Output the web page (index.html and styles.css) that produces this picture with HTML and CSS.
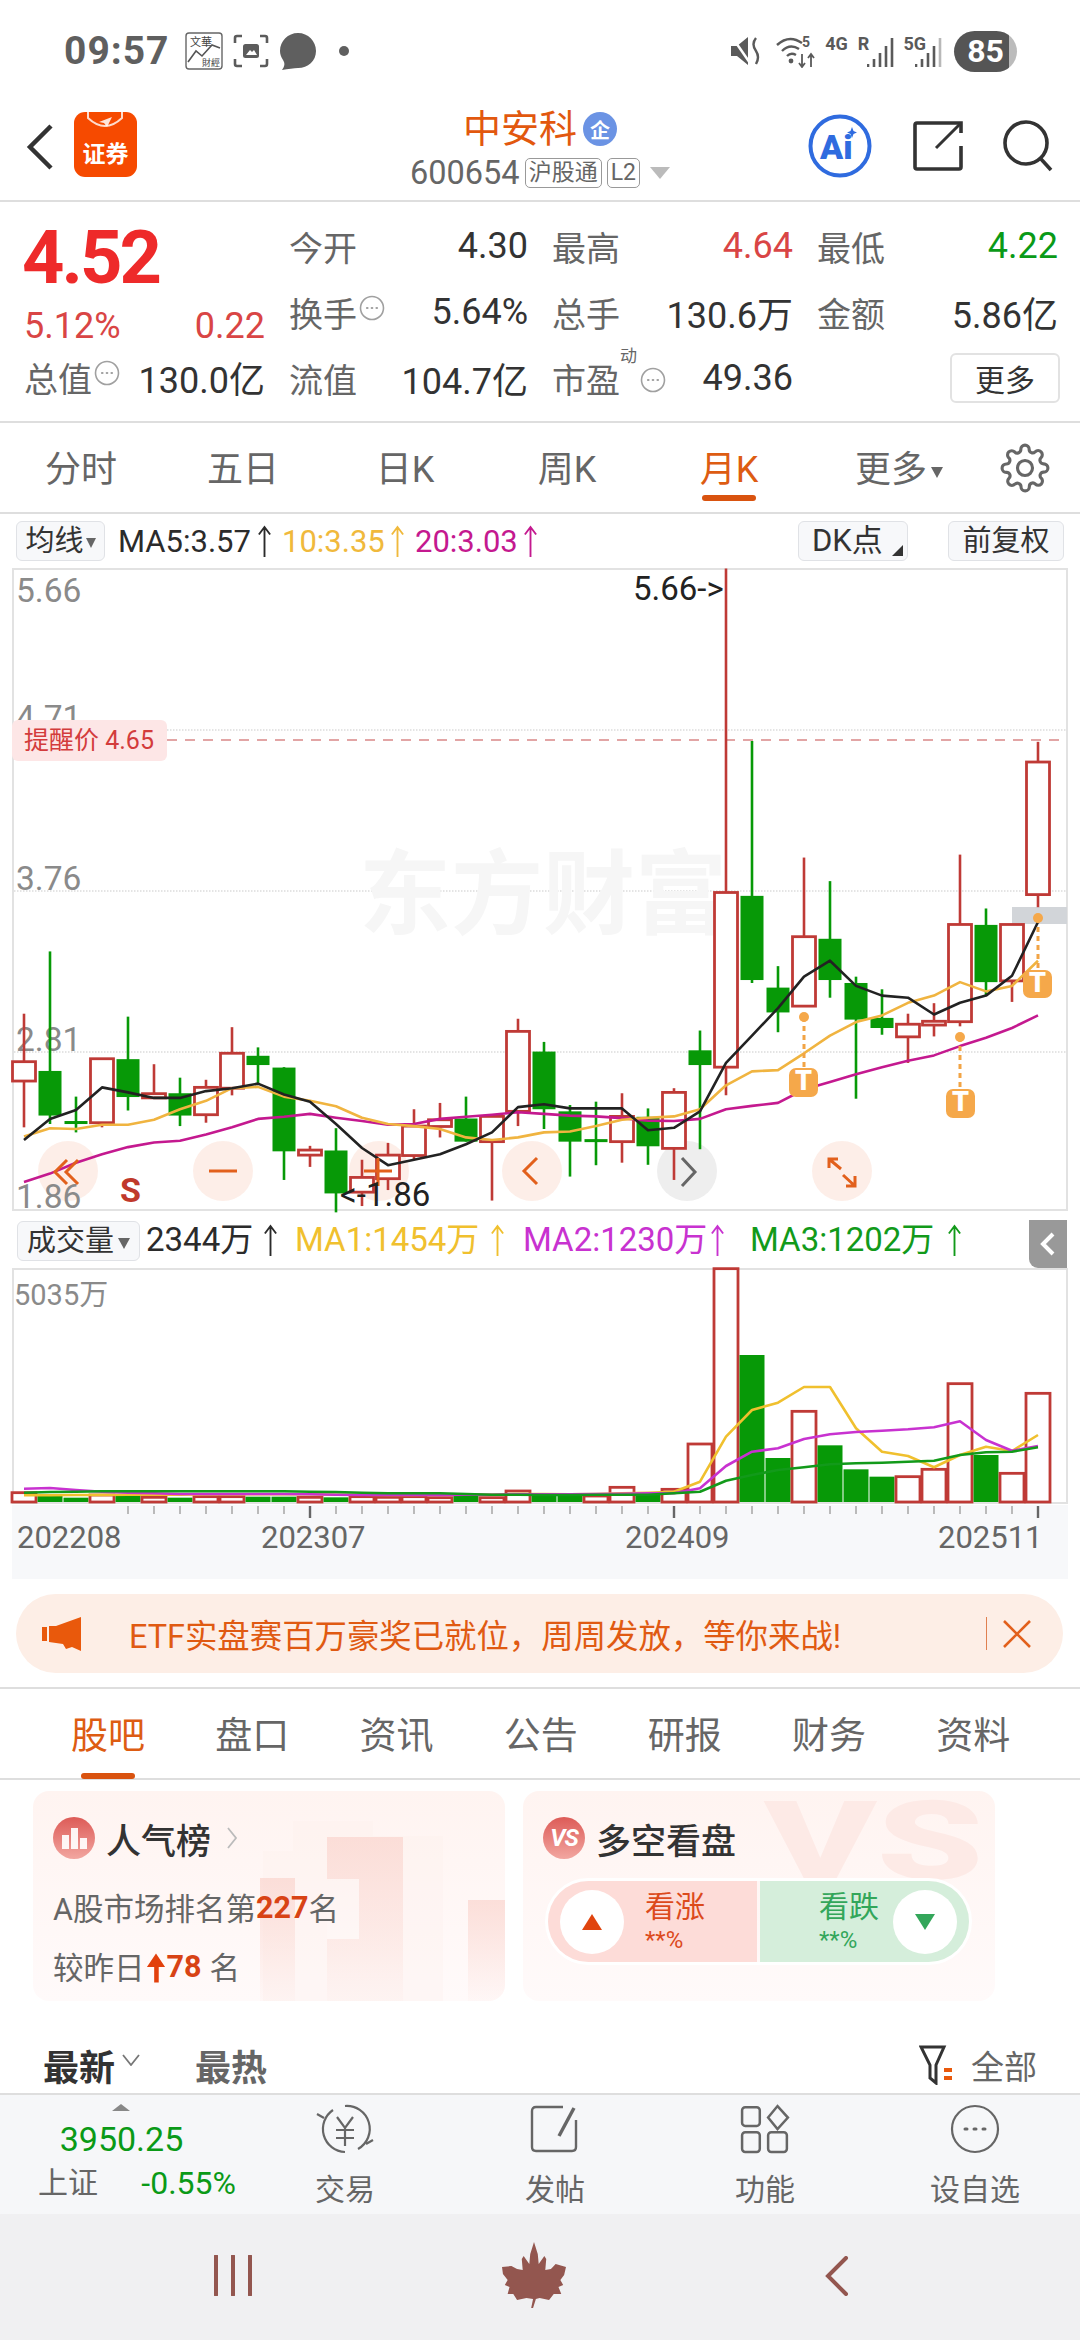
FILE: index.html
```html
<!DOCTYPE html>
<html lang="zh-CN">
<head>
  <meta charset="UTF-8">
  <title>中安科 600654</title>
  <link rel="stylesheet" href="styles.css">
</head>
<body>

<!-- === Status Bar === -->
<div class="status">
  <span class="clock">09:57</span>
  <svg class="st-news" viewBox="0 0 38 38">
    <rect x="1" y="1" width="36" height="36" rx="3" fill="#fff" stroke="#666" stroke-width="1.4"/>
    <text x="5" y="14" class="st-news-a">文華</text>
    <text x="17" y="34" class="st-news-b">財經</text>
    <polyline points="3,30 11,19 17,24 27,13 35,16" fill="none" stroke="#555" stroke-width="1.6"/>
  </svg>
  <svg class="st-shot" viewBox="0 0 36 34" fill="none" stroke="#5c5c5c" stroke-width="2.6">
    <path d="M9 2H4Q2 2 2 4V9M27 2H32Q34 2 34 4V9M2 25V30Q2 32 4 32H9M34 25V30Q34 32 32 32H27"/>
    <rect x="10" y="10" width="16" height="14" rx="2.5" fill="#5c5c5c" stroke="none"/>
    <path d="M13 21L17 16L19 18L21 16L24 21Z" fill="#fff" stroke="none"/>
  </svg>
  <svg class="st-bubble" viewBox="0 0 38 38"><path d="M19 1C29 1 37 9 37 19C37 29 29 36 19 36C15 36 9 37 3 38C6 34 6 31 4 28C2 25 1 22 1 19C1 9 9 1 19 1Z" fill="#5f5f5f"/></svg>
  <i class="st-dot"></i>
  <span class="status-gap"></span>
  <svg class="st-mute" viewBox="0 0 30 30">
    <path d="M0 10H6L17 1V29L6 20H0Z" fill="#5a5a5a"/>
    <path d="M1 1L19 27" stroke="#fff" stroke-width="2.5"/>
    <path d="M25 2Q20 8 25 15Q29 21 25 28" fill="none" stroke="#5a5a5a" stroke-width="2.4"/>
  </svg>
  <svg class="st-wifi" viewBox="0 0 42 34" fill="none" stroke="#5a5a5a" stroke-width="2.4">
    <path d="M1 11Q13 0 26 9M6 17Q14 9 23 15M11 22Q15 18 20 21"/>
    <circle cx="15" cy="27" r="2.4" fill="#5a5a5a" stroke="none"/>
    <path d="M26 20V33M23 29L26 33L29 29M35 33V20M32 24L35 20L38 24" stroke-width="1.8"/>
    <text x="26" y="13" class="st-tiny" fill="#5a5a5a" stroke="none">5</text>
  </svg>
  <span class="st-net st-4g">4G</span>
  <span class="st-net st-r">R</span>
  <svg class="st-bars" viewBox="0 0 27 30"><path d="M1 30V27M7 30V22M13 30V16M19 30V9M25 30V1" stroke="#5a5a5a" stroke-width="2.6"/></svg>
  <span class="st-net st-5g">5G</span>
  <svg class="st-bars st-bars-b" viewBox="0 0 27 30"><path d="M1 30V27M7 30V22M13 30V16M19 30V9" stroke="#5a5a5a" stroke-width="2.6"/><path d="M25 30V1" stroke="#b8b8b8" stroke-width="2.6"/></svg>
  <span class="battery"><b>85</b></span>
</div>

<!-- === Stock Header === -->
<header class="topbar">
  <div class="top-left">
    <svg class="back" viewBox="0 0 28 48"><path d="M25 3L4 24L25 45" fill="none" stroke="#333" stroke-width="4.5"/></svg>
    <div class="app-icon">
      <svg viewBox="0 0 63 26" class="app-mark"><path d="M14 0V6Q31 22 48 6V0" fill="none" stroke="#fff" stroke-opacity=".8" stroke-width="2"/><path d="M25 10L38 5L33 15L30 11Z" fill="#fff" fill-opacity=".85"/></svg>
      <span>证券</span>
    </div>
  </div>
  <div class="top-title">
    <div class="name-line"><span class="stock-name">中安科</span><span class="name-badge">企</span></div>
    <div class="code-line"><span class="stock-code">600654</span><span class="tag">沪股通</span><span class="tag">L2</span><i class="tri-down"></i></div>
  </div>
  <div class="top-right">
    <svg class="ai-icon" viewBox="0 0 64 64">
      <circle cx="32" cy="32" r="29.5" fill="#fff" stroke="#2f6bdf" stroke-width="4"/>
      <text x="12" y="45" class="ai-text">Ai</text>
      <path d="M44 13L45.500 17L49 18.500L45.500 20L44 24L42.500 20L39 18.500L42.500 17Z" fill="#2f6bdf"/>
    </svg>
    <svg class="ic-share" viewBox="0 0 50 50" fill="none" stroke="#333" stroke-width="3.6">
      <path d="M48 25V46Q48 48 46 48H4Q2 48 2 46V4Q2 2 4 2H48V12"/>
      <path d="M23 27L47 3" stroke-width="3"/>
    </svg>
    <svg class="ic-search" viewBox="0 0 50 52" fill="none" stroke="#333" stroke-width="3.6">
      <circle cx="23" cy="23" r="21"/><path d="M38 39L48 50"/>
    </svg>
  </div>
</header>

<!-- === Quote Panel === -->
<section class="quote">
  <div class="quote-left">
    <div class="price">4.52</div>
    <div class="change"><span>5.12%</span><span>0.22</span></div>
    <div class="cell total"><span class="lbl">总值<svg class="more-dot" viewBox="0 0 26 26"><circle cx="13" cy="13" r="11.5"/><path class="dots" d="M8 13h.5M12.750 13h.5M17.500 13h.5"/></svg></span><span class="val">130.0亿</span></div>
  </div>
  <div class="quote-grid">
    <div class="cell"><span class="lbl">今开</span><span class="val">4.30</span></div>
    <div class="cell"><span class="lbl">最高</span><span class="val up">4.64</span></div>
    <div class="cell"><span class="lbl">最低</span><span class="val down">4.22</span></div>
    <div class="cell"><span class="lbl">换手<svg class="more-dot" viewBox="0 0 26 26"><circle cx="13" cy="13" r="11.5"/><path class="dots" d="M8 13h.5M12.750 13h.5M17.500 13h.5"/></svg></span><span class="val">5.64%</span></div>
    <div class="cell"><span class="lbl">总手</span><span class="val">130.6万</span></div>
    <div class="cell"><span class="lbl">金额</span><span class="val">5.86亿</span></div>
    <div class="cell"><span class="lbl">流值</span><span class="val">104.7亿</span></div>
    <div class="cell"><span class="lbl">市盈<sup>动</sup><svg class="more-dot" viewBox="0 0 26 26"><circle cx="13" cy="13" r="11.5"/><path class="dots" d="M8 13h.5M12.750 13h.5M17.500 13h.5"/></svg></span><span class="val">49.36</span></div>
    <div class="cell cell-end"><button class="more-btn">更多</button></div>
  </div>
</section>

<!-- === Period Tabs === -->
<nav class="periods">
  <a>分时</a><a>五日</a><a>日K</a><a>周K</a>
  <a class="on">月K</a>
  <a class="more-tab">更多<i class="tri-small"></i></a>
  <svg class="ic-gear" viewBox="0 0 24 24" fill="none" stroke="#666" stroke-width="1.5">
    <circle cx="12" cy="12" r="3.6"/>
    <path d="M19.4 15a1.65 1.65 0 0 0 .33 1.82l.06.06a2 2 0 0 1 0 2.83 2 2 0 0 1-2.83 0l-.06-.06a1.65 1.65 0 0 0-1.82-.33 1.65 1.65 0 0 0-1 1.51V21a2 2 0 0 1-2 2 2 2 0 0 1-2-2v-.09A1.65 1.65 0 0 0 9 19.4a1.65 1.65 0 0 0-1.82.33l-.06.06a2 2 0 0 1-2.83 0 2 2 0 0 1 0-2.83l.06-.06a1.65 1.65 0 0 0 .33-1.82 1.65 1.65 0 0 0-1.51-1H3a2 2 0 0 1-2-2 2 2 0 0 1 2-2h.09A1.65 1.65 0 0 0 4.6 9a1.65 1.65 0 0 0-.33-1.82l-.06-.06a2 2 0 0 1 0-2.83 2 2 0 0 1 2.83 0l.06.06a1.65 1.65 0 0 0 1.82.33H9a1.65 1.65 0 0 0 1-1.51V3a2 2 0 0 1 2-2 2 2 0 0 1 2 2v.09a1.65 1.65 0 0 0 1 1.51 1.65 1.65 0 0 0 1.82-.33l.06-.06a2 2 0 0 1 2.83 0 2 2 0 0 1 0 2.83l-.06.06a1.65 1.65 0 0 0-.33 1.82V9a1.65 1.65 0 0 0 1.51 1H21a2 2 0 0 1 2 2 2 2 0 0 1-2 2h-.09a1.65 1.65 0 0 0-1.51 1z"/>
  </svg>
</nav>

<!-- === MA Legend === -->
<div class="ma-row">
  <span class="chip chip-ma">均线<i class="tri-small"></i></span>
  <span class="ma ma-a black">MA5:3.57<svg class="up-arrow" viewBox="0 0 16 34"><path d="M8 34V2M2 10L8 2L14 10"/></svg></span>
  <span class="ma ma-b yellow">10:3.35<svg class="up-arrow" viewBox="0 0 16 34"><path d="M8 34V2M2 10L8 2L14 10"/></svg></span>
  <span class="ma ma-b magenta">20:3.03<svg class="up-arrow" viewBox="0 0 16 34"><path d="M8 34V2M2 10L8 2L14 10"/></svg></span>
  <span class="chip chip-dk">DK点<i class="corner"></i></span>
  <span class="chip chip-fq">前复权</span>
</div>

<!-- === Price Chart === -->
<svg id="mainChart" class="chart chart-main" viewBox="0 568 1080 645">
  <rect x="13" y="569" width="1054" height="641" fill="#fff" stroke="#e2e2e2" stroke-width="2"/>
  <path class="grid-line" d="M14 730H1066M14 891H1066M14 1052H1066"/>
  <text x="359" y="927" class="watermark">东方财富</text>
  <g class="round-btn">
    <circle cx="68" cy="1171" r="30"/><circle cx="223" cy="1171" r="30"/><circle cx="379" cy="1171" r="30"/>
    <circle cx="532" cy="1171" r="30"/><circle cx="842" cy="1171" r="30"/>
    <circle cx="687" cy="1171" r="30" class="gray"/>
  </g>
  <text x="16" y="602" class="axis-y">5.66</text>
  <text x="16" y="729" class="axis-y">4.71</text>
  <text x="16" y="890" class="axis-y">3.76</text>
  <text x="16" y="1051" class="axis-y">2.81</text>
  <text x="16" y="1208" class="axis-y">1.86</text>
  <path d="M167 740H1067" class="alert-line"/>
  <rect x="12" y="720" width="155" height="41" rx="6" fill="#fde6e6"/>
  <text x="24" y="749" class="alert-text">提醒价 4.65</text>
  <rect x="1012" y="907" width="55" height="17" fill="#d2d5d9"/>
  <g id="candles"></g>
  <g id="mainLines"></g>
  <g class="round-icon">
    <path d="M67 1160L55 1172L67 1184M78 1160L66 1172L78 1184"/>
    <path d="M209 1171H237"/>
    <path d="M364 1171H392M378 1158V1186"/>
    <path d="M537 1158L524 1171L537 1184"/>
    <path d="M682 1158L695 1172L682 1186" class="gray"/>
    <path d="M829 1168V1159H838M829 1159L841 1169M855 1176V1186H846M855 1186L843 1175"/>
  </g>
  <text x="120" y="1202" class="s-mark">S</text>
  <text x="633" y="600" class="axis-note">5.66-&gt;</text>
  <text x="340" y="1206" class="axis-note">&lt;-1.86</text>
  <g class="t-mark">
    <path d="M804 1017V1068M960 1037V1089M1038 918V970"/>
    <circle cx="804" cy="1017" r="5"/><circle cx="960" cy="1037" r="5"/><circle cx="1038" cy="918" r="5"/>
    <rect x="789" y="1068" width="29" height="29" rx="7"/><rect x="946" y="1089" width="29" height="29" rx="7"/><rect x="1023" y="970" width="29" height="28" rx="7"/>
    <text x="803.5" y="1090">T</text><text x="960.5" y="1111">T</text><text x="1037.5" y="992">T</text>
  </g>
</svg>

<!-- === Volume Legend === -->
<div class="vol-row">
  <span class="chip chip-vol">成交量<i class="tri-small"></i></span>
  <span class="vol-item vol-a black">2344万<svg class="up-arrow" viewBox="0 0 16 34"><path d="M8 34V2M2 10L8 2L14 10"/></svg></span>
  <span class="vol-item vol-b gold">MA1:1454万<svg class="up-arrow" viewBox="0 0 16 34"><path d="M8 34V2M2 10L8 2L14 10"/></svg></span>
  <span class="vol-item vol-c purple">MA2:1230万<svg class="up-arrow" viewBox="0 0 16 34"><path d="M8 34V2M2 10L8 2L14 10"/></svg></span>
  <span class="vol-item vol-d green">MA3:1202万<svg class="up-arrow" viewBox="0 0 16 34"><path d="M8 34V2M2 10L8 2L14 10"/></svg></span>
  <span class="collapse"><svg viewBox="0 0 16 26" width="16" height="26"><path d="M13 3L3 13L13 23" fill="none" stroke="#fff" stroke-width="4"/></svg></span>
</div>

<!-- === Volume Chart === -->
<svg id="volChart" class="chart chart-vol" viewBox="0 1268 1080 311">
  <rect x="13" y="1269" width="1054" height="234" fill="#fff" stroke="#e2e2e2" stroke-width="2"/>
  <rect x="12" y="1505" width="1056" height="74" fill="#f7f8fa"/>
  <text x="14" y="1305" class="axis-vol">5035万</text>
  <g id="volBars"></g>
  <g id="volLines"></g>
  <g id="volTicks"></g>
  <text x="17" y="1548" class="axis-date">202208</text>
  <text x="261" y="1548" class="axis-date">202307</text>
  <text x="625" y="1548" class="axis-date">202409</text>
  <text x="938" y="1548" class="axis-date">202511</text>
</svg>

<!-- === Notice === -->
<div class="notice-wrap">
  <div class="notice">
    <svg class="notice-horn" viewBox="0 0 40 36"><path d="M0 11H5V25H0ZM7 10H14L39 1V35L30 31L24 33L21 28L7 26Z" fill="#e9590c"/></svg>
    <span class="notice-text">ETF实盘赛百万豪奖已就位，周周发放，等你来战!</span>
    <i class="notice-sep"></i>
    <svg class="notice-x" viewBox="0 0 30 30"><path d="M2 2L28 28M28 2L2 28" stroke="#e2601c" stroke-width="2.6"/></svg>
  </div>
</div>

<!-- === Info Tabs === -->
<nav class="info-tabs">
  <a class="on">股吧</a><a>盘口</a><a>资讯</a><a>公告</a><a>研报</a><a>财务</a><a>资料</a>
</nav>

<!-- === Rank / Sentiment Cards === -->
<section class="cards">
  <div class="card">
    <svg class="card-art" viewBox="0 0 472 210">
      <defs>
        <linearGradient id="podiumFade" x1="0" y1="0" x2="0" y2="1">
          <stop offset="0" stop-color="#fad4cd" stop-opacity=".7"/>
          <stop offset="1" stop-color="#fad4cd" stop-opacity=".08"/>
        </linearGradient>
      </defs>
      <path d="M260 30H340V45H410V210H230V60H260Z" fill="#fdeeea" fill-opacity=".3"/>
      <rect x="294" y="46" width="76" height="164" fill="url(#podiumFade)"/>
      <rect x="294" y="88" width="32" height="60" fill="#fff" fill-opacity=".6"/>
      <rect x="227" y="87" width="35" height="123" fill="url(#podiumFade)"/>
      <rect x="435" y="109" width="37" height="101" fill="url(#podiumFade)"/>
    </svg>
    <div class="card-head">
      <span class="card-icon"><svg viewBox="0 0 42 42" width="42" height="42"><path d="M9 18H16V32H9ZM18 11H25V32H18ZM27 21H34V32H27Z" fill="#fff" fill-opacity=".92"/></svg></span>
      <b>人气榜</b>
      <svg class="card-more" viewBox="0 0 12 24"><path d="M2 2L10 12L2 22" fill="none" stroke="#bbb" stroke-width="1.8"/></svg>
    </div>
    <p class="rank-line">A股市场排名第<strong>227</strong>名</p>
    <p class="rank-line rank-line-b">较昨日<svg class="rank-arrow" viewBox="0 0 22 32"><path d="M11 0L21 15H14V32H9V15H1Z" fill="#e2400c"/></svg><strong>78</strong><span class="rank-unit">名</span></p>
  </div>
  <div class="card">
    <span class="card-vs">VS</span>
    <div class="card-head">
      <span class="card-icon"><i>VS</i></span>
      <b>多空看盘</b>
    </div>
    <div class="vote">
      <div class="vote-side vote-up">
        <span class="vote-ball"><i class="vote-tri-up"></i></span>
        <span class="vote-txt">看涨<small>**%</small></span>
      </div>
      <div class="vote-side vote-down">
        <span class="vote-txt">看跌<small>**%</small></span>
        <span class="vote-ball"><i class="vote-tri-down"></i></span>
      </div>
    </div>
  </div>
</section>

<!-- === Feed Header === -->
<div class="feed-head">
  <b class="feed-on">最新</b>
  <svg class="feed-caret" viewBox="0 0 18 12"><path d="M1 1L9 11L17 1" fill="none" stroke="#777" stroke-width="1.8"/></svg>
  <b class="feed-off">最热</b>
  <svg class="feed-filter" viewBox="0 0 34 40" fill="none" stroke="#333" stroke-width="3">
    <path d="M2 2H25L17 20V38L11 33V20Z"/>
    <path d="M25 25H33M25 33H33" stroke="#e9590c" stroke-width="4"/>
  </svg>
  <span class="feed-all">全部</span>
</div>

<!-- === Dock === -->
<div class="dock">
  <div class="index-box">
    <i class="index-tri"></i>
    <div class="index-val">3950.25</div>
    <div class="index-row"><span>上证</span><span class="down">-0.55%</span></div>
  </div>
  <div class="dock-item">
    <svg viewBox="0 0 58 50" fill="none" stroke="#666" stroke-width="2.2">
      <path d="M29 2A23 23 0 0 1 42 45M29 48A23 23 0 0 1 17 6M1 10L8 14M50 40L57 36"/>
      <path d="M21 13L29 24L37 13M20 26H38M20 34H38M29 24V42"/>
    </svg>
    <span>交易</span>
  </div>
  <div class="dock-item">
    <svg viewBox="0 0 50 50" fill="none" stroke="#666" stroke-width="2.4">
      <path d="M33 3H6Q2 3 2 7V43Q2 47 6 47H42Q46 47 46 43V16"/>
      <path d="M44 4L29 32" stroke-width="3.4"/>
    </svg>
    <span>发帖</span>
  </div>
  <div class="dock-item">
    <svg viewBox="0 0 48 48" fill="none" stroke="#666" stroke-width="2.4">
      <rect x="2" y="3" width="17" height="18" rx="3"/>
      <path d="M36 2L46 13L36 24L27 13Z"/>
      <rect x="2" y="27" width="17" height="19" rx="3"/>
      <rect x="27" y="27" width="18" height="19" rx="3"/>
    </svg>
    <span>功能</span>
  </div>
  <div class="dock-item">
    <svg viewBox="0 0 50 50" fill="none" stroke="#666" stroke-width="2.2">
      <circle cx="25" cy="25" r="23"/>
      <path d="M15 25h2M24 25h2M33 25h2" stroke-width="3" stroke-linecap="round"/>
    </svg>
    <span>设自选</span>
  </div>
</div>

<!-- === System Nav === -->
<div class="sysnav">
  <svg class="nav-menu" viewBox="0 0 38 41"><path d="M2 1V40M19 1V40M36 1V40" stroke="#93564f" stroke-width="4" stroke-linecap="round"/></svg>
  <svg class="nav-leaf" viewBox="0 0 68 66" preserveAspectRatio="none"><path d="M34 0L38 12L39 22L45 14L47 17L46 28L52 27L57 22L68 25L66 33L62 38L65 43L60 45L63 52L55 52L50 58L40 56L36 57L33 66L31 66L33 57L26 56L16 58L12 52L6 52L8 45L3 43L6 38L1 32L0 25L10 24L16 27L22 28L21 17L23 14L29 22L30 12Z" fill="#93564f"/></svg>
  <svg class="nav-back" viewBox="0 0 24 40"><path d="M21 2L3 20L21 38" fill="none" stroke="#93564f" stroke-width="4" stroke-linecap="round"/></svg>
</div>

<script src="chart.js"></script>
</body>
</html>
```

FILE: styles.css
```css
/* ===== Global ===== */
* {
  margin: 0;
  padding: 0;
  box-sizing: border-box;
}
body {
  width: 1080px;
  height: 2340px;
  overflow: hidden;
  background: #fff;
  color: #333;
  font-family: Roboto, "Noto Sans CJK SC", sans-serif;
}
i, em {
  font-style: normal;
}
svg {
  display: block;
  flex: none;
}

/* ===== Status Bar ===== */
.status {
  height: 90px;
  display: flex;
  align-items: center;
  padding: 12px 0 0 64px;
  color: #5f5f5f;
}
.clock {
  font-size: 39px;
  font-weight: 700;
  width: 121px;
  letter-spacing: 1px;
}
.st-news { width: 38px; height: 38px; margin-right: 10px; }
.st-news-a { font-size: 11px; fill: #444; }
.st-news-b { font-size: 9px; fill: #444; }
.st-shot { width: 36px; height: 34px; margin-right: 10px; }
.st-bubble { width: 38px; height: 38px; margin-right: 22px; }
.st-dot { width: 10px; height: 10px; border-radius: 50%; background: #5f5f5f; }
.status-gap { flex: 1; }
.st-mute { width: 30px; height: 30px; margin-right: 15px; }
.st-wifi { width: 42px; height: 34px; margin-right: 7px; }
.st-tiny { font-size: 14px; font-weight: 700; }
.st-net { font-size: 18px; font-weight: 700; color: #5a5a5a; margin-top: -16px; }
.st-4g { margin-right: 10px; }
.st-r { margin-right: -2px; }
.st-bars { width: 27px; height: 30px; margin-top: 2px; }
.st-5g { margin-left: 9px; margin-right: -11px; }
.st-bars-b { margin-right: 12px; }
.battery {
  width: 63px;
  height: 41px;
  border-radius: 21px;
  background: linear-gradient(to right, #555 88%, #bbb 88%);
  display: flex;
  align-items: center;
  justify-content: center;
  margin-right: 63px;
  color: #fff;
  font-size: 32px;
}

/* ===== Top Bar ===== */
.topbar {
  height: 112px;
  display: grid;
  grid-template-columns: 1fr 280px 1fr;
  align-items: center;
  border-bottom: 2px solid #dedede;
}
.top-left {
  display: flex;
  align-items: center;
  padding-left: 26px;
  padding-top: 4px;
  gap: 20px;
}
.back { width: 28px; height: 48px; }
.app-icon {
  width: 63px;
  height: 65px;
  border-radius: 11px;
  background: #f64a00;
  color: #fff;
  font-size: 23px;
  font-weight: 700;
  text-align: center;
  line-height: 26px;
  overflow: hidden;
  margin-top: -6px;
}
.app-mark { width: 63px; height: 26px; margin-bottom: 4px; }
.top-title {
  display: flex;
  flex-direction: column;
  align-items: center;
}
.name-line {
  display: flex;
  align-items: center;
  gap: 6px;
  height: 44px;
  margin-top: 8px;
}
.stock-name {
  font-size: 38px;
  line-height: 44px;
  color: #e2580e;
}
.name-badge {
  width: 34px;
  height: 34px;
  border-radius: 50%;
  background: #6b93e4;
  color: #fff;
  font-size: 20px;
  font-weight: 700;
  display: flex;
  align-items: center;
  justify-content: center;
}
.code-line {
  display: flex;
  align-items: center;
  gap: 5px;
  height: 36px;
  margin-top: 4px;
  white-space: nowrap;
  color: #666;
}
.stock-code { font-size: 32.500px; }
.tag {
  font-size: 23px;
  line-height: 28px;
  border: 1.5px solid #999;
  border-radius: 5px;
  padding: 0 3px;
}
.tri-down {
  width: 0;
  height: 0;
  border: 10px solid transparent;
  border-top: 12px solid #bbb;
  border-bottom: 0;
  margin-left: 5px;
}
.top-right {
  display: flex;
  justify-content: flex-end;
  align-items: center;
  gap: 40px;
  padding-right: 27px;
  padding-top: 2px;
}
.ai-icon { width: 64px; height: 64px; margin-right: 1px; }
.ai-text { font-size: 34px; font-weight: 900; fill: #2f6bdf; }
.ic-share { width: 50px; height: 50px; }
.ic-search { width: 50px; height: 52px; }

/* ===== Quote Panel ===== */
.quote {
  height: 221px;
  display: flex;
  gap: 24px;
  padding: 12px 22px 0 24px;
  border-bottom: 2px solid #dedede;
}
.quote-left { width: 241px; flex: none; }
.price {
  font-size: 74px;
  line-height: 70px;
  font-weight: 700;
  color: #ee2a2a;
  margin-top: 9px;
  margin-left: -2px;
  letter-spacing: -3px;
}
.change {
  display: flex;
  justify-content: space-between;
  font-size: 36px;
  line-height: 44px;
  color: #d94545;
  margin-top: 11px;
}
.quote-grid {
  flex: 1;
  display: grid;
  grid-template-columns: 239px 241px 241px;
  grid-template-rows: repeat(3, 66px);
  column-gap: 24px;
  margin-top: -1px;
}
.cell {
  display: flex;
  justify-content: space-between;
  align-items: center;
  white-space: nowrap;
}
.total { height: 66px; margin-top: -4px; }
.cell-end { justify-content: flex-end; }
.lbl {
  font-size: 34px;
  color: #666;
  display: flex;
  align-items: center;
  position: relative;
}
.lbl sup {
  position: absolute;
  left: 68px;
  top: -8px;
  font-size: 17px;
  line-height: 20px;
}
.val {
  font-size: 36px;
  color: #333;
}
.val.up { color: #d94545; }
.val.down, .down { color: #0a9a17; }
.more-dot {
  width: 26px;
  height: 26px;
  margin-left: 2px;
  margin-top: -8px;
  fill: none;
  stroke: #a0a0a0;
  stroke-width: 1.6;
}
.dots { stroke-width: 2.2; stroke-linecap: round; }
.lbl sup + .more-dot { margin-left: 20px; margin-top: 4px; }
.more-btn {
  width: 110px;
  height: 50px;
  margin-right: -2px;
  background: #fff;
  border: 2px solid #e2e2e2;
  border-radius: 6px;
  font: inherit;
  font-size: 30px;
  color: #333;
}

/* ===== Period Tabs ===== */
.periods {
  height: 91px;
  display: grid;
  grid-template-columns: repeat(6, 162px) 1fr;
  align-items: center;
  border-bottom: 2px solid #dedede;
  position: relative;
}
.periods a {
  font-size: 36px;
  color: #666;
  text-align: center;
  height: 89px;
  line-height: 94px;
  position: relative;
}
.periods a.more-tab { padding-left: 16px; white-space: nowrap; }
.periods a.on { color: #dd5c12; }
.periods a.on::after {
  content: "";
  position: absolute;
  left: 54px;
  bottom: 11px;
  width: 54px;
  height: 6px;
  border-radius: 3px;
  background: #d9530f;
}
.tri-small {
  display: inline-block;
  width: 0;
  height: 0;
  border: 6px solid transparent;
  border-top: 11px solid #666;
  border-bottom: 0;
  margin-left: 4px;
  vertical-align: middle;
}
.ic-gear { width: 50px; height: 50px; margin-left: 28px; }

/* ===== Legends ===== */
.ma-row {
  height: 54px;
  display: flex;
  align-items: center;
  padding-left: 16px;
  white-space: nowrap;
}
.chip {
  height: 40px;
  line-height: 38px;
  background: #f7f8fa;
  border: 1.5px solid #e0e2e6;
  border-radius: 6px;
  font-size: 29px;
  color: #333;
  text-align: center;
  position: relative;
}
.chip-ma { width: 89px; margin-right: 13px; }
.chip-ma .tri-small { border-width: 5px; border-top-width: 10px; border-bottom: 0; margin-left: 2px; }
.chip-dk { width: 110px; margin-left: auto; margin-right: 40px; text-align: left; padding-left: 13px; font-size: 31px; }
.chip-fq { width: 116px; margin-right: 16px; }
.corner {
  position: absolute;
  right: 4px;
  bottom: 4px;
  border-left: 11px solid transparent;
  border-bottom: 11px solid #333;
}
.ma {
  font-size: 31px;
  margin-right: 10px;
  display: flex;
  justify-content: space-between;
  align-items: center;
}
.ma-a { width: 154px; }
.ma-b { width: 123px; }
.up-arrow {
  width: 15px;
  height: 32px;
  fill: none;
  stroke: currentColor;
  stroke-width: 2;
}
.black { color: #2b2b2b; }
.yellow { color: #f0b93c; }
.magenta { color: #c4198f; }
.gold { color: #f0c02e; }
.purple { color: #c832d0; }
.green { color: #129a1a; }

/* ===== Charts ===== */
.chart { width: 1080px; overflow: visible; }
.chart-main { height: 645px; }
.chart-vol { height: 311px; }
.grid-line {
  fill: none;
  stroke: #dcdcdc;
  stroke-width: 1.5;
  stroke-dasharray: 1.5 1.5;
}
.watermark {
  font-size: 92px;
  font-weight: 700;
  fill: #f6f6f6;
}
.axis-y { font-size: 33.500px; fill: #8a8a8a; }
.axis-note { font-size: 33px; fill: #222; }
.alert-line { fill: none; stroke: #d98888; stroke-width: 1.5; stroke-dasharray: 10 8; }
.alert-text { font-size: 25px; fill: #d33c3c; }
.round-btn circle { fill: #fdeae2; fill-opacity: .8; }
.round-btn .gray { fill: #eeeeee; fill-opacity: 1; }
.round-icon path { fill: none; stroke: #e2601c; stroke-width: 3; }
.round-icon .gray { stroke: #666; }
.s-mark { font-size: 34px; font-weight: 700; fill: #c0392b; }
.t-mark path { fill: none; stroke: #f2a445; stroke-width: 3; stroke-dasharray: 5 4; }
.t-mark circle, .t-mark rect { fill: #f5a84a; }
.t-mark text { font-size: 27px; font-weight: 900; fill: #fff; text-anchor: middle; }
.axis-vol { font-size: 29px; fill: #8a8a8a; }
.axis-date { font-size: 31px; fill: #666; }

.vol-row {
  height: 55px;
  display: flex;
  align-items: flex-start;
  padding: 8px 0 0 17px;
  white-space: nowrap;
  position: relative;
}
.chip-vol { width: 123px; margin-right: 6px; }
.vol-item {
  font-size: 33px;
  line-height: 38px;
  display: flex;
  justify-content: space-between;
  align-items: center;
}
.vol-a { width: 132px; margin-right: 17px; }
.vol-b { width: 210px; margin-right: 18px; }
.vol-c { width: 202px; margin-right: 25px; }
.vol-d { width: 212px; }
.collapse {
  position: absolute;
  right: 13px;
  top: 7px;
  width: 38px;
  height: 48px;
  background: #999;
  border-radius: 0 0 0 9px;
  display: flex;
  align-items: center;
  justify-content: center;
}

/* ===== Notice ===== */
.notice-wrap {
  height: 110px;
  padding: 15px 17px 0 16px;
  border-bottom: 2px solid #dedede;
}
.notice {
  height: 79px;
  border-radius: 40px;
  background: #fdeee6;
  display: flex;
  align-items: center;
  padding-left: 26px;
}
.notice-horn { width: 40px; height: 36px; margin-right: 47px; }
.notice-text {
  width: 857px;
  font-size: 32.400px;
  color: #e05a12;
  white-space: nowrap;
}
.notice-sep { width: 1px; height: 33px; background: #e08050; margin-right: 15px; }
.notice-x { width: 30px; height: 30px; }

/* ===== Info Tabs ===== */
.info-tabs {
  height: 91px;
  display: grid;
  grid-template-columns: repeat(7, 144.200px);
  padding-left: 36px;
  border-bottom: 2px solid #dedede;
}
.info-tabs a {
  font-size: 37px;
  color: #666;
  text-align: center;
  line-height: 96px;
  position: relative;
}
.info-tabs a.on { color: #dd5c12; }
.info-tabs a.on::after {
  content: "";
  position: absolute;
  left: 45px;
  bottom: 6px;
  width: 54px;
  height: 6px;
  border-radius: 3px;
  background: #d9530f;
}

/* ===== Cards ===== */
.cards {
  height: 240px;
  display: flex;
  gap: 18px;
  padding: 11px 0 0 33px;
}
.card {
  width: 472px;
  height: 210px;
  border-radius: 16px;
  background: linear-gradient(to bottom, #fff4f1, #fffafa);
  position: relative;
  padding: 26px 20px 0;
}
.card-art { position: absolute; left: 0; top: 0; width: 472px; height: 210px; border-radius: 16px; }
.card-vs {
  position: absolute;
  left: 241px;
  top: 16px;
  font-size: 110px;
  line-height: 70px;
  font-weight: 900;
  color: #fdeae6;
  transform: scaleX(1.55);
  transform-origin: left center;
}
.card-head {
  position: relative;
  display: flex;
  align-items: center;
  height: 42px;
}
.card-head b {
  font-size: 35px;
  font-weight: 500;
  color: #333;
  margin-left: 11px;
}
.card-icon {
  width: 42px;
  height: 42px;
  border-radius: 50%;
  background: linear-gradient(to bottom, #dd5b57, #f2a6a0);
  color: #fff;
  font-size: 24px;
  font-weight: 700;
  text-align: center;
  line-height: 42px;
}
.card-icon i { font-style: italic; letter-spacing: -1px; }
.card-more { width: 12px; height: 24px; margin-left: 15px; }
.rank-line {
  position: relative;
  display: flex;
  align-items: center;
  margin-top: 26px;
  height: 44px;
  font-size: 30.500px;
  color: #666;
  white-space: nowrap;
}
.rank-line-b { margin-top: 15px; }
.rank-line strong { color: #d84315; font-weight: 700; }
.rank-arrow { width: 20px; height: 32px; margin: 4px 1px 0 1px; }
.rank-unit { margin-left: 8px; }
.vote {
  position: relative;
  margin: 19px 3px 0 2px;
  height: 87px;
  border-radius: 44px;
  display: grid;
  grid-template-columns: 1fr 1fr;
  column-gap: 3px;
  overflow: hidden;
  border: 3px solid #fff;
}
.vote-side {
  display: flex;
  align-items: center;
  min-width: 0;
}
.vote-up { background: #fddcd8; color: #dc4a1c; padding-left: 12px; gap: 21px; }
.vote-down { background: #d5eedb; color: #33a65a; padding-left: 59px; gap: 14px; }
.vote-ball {
  width: 64px;
  height: 64px;
  border-radius: 50%;
  background: #fff;
  display: flex;
  align-items: center;
  justify-content: center;
}
.vote-txt {
  font-size: 30px;
  line-height: 36px;
  display: flex;
  flex-direction: column;
}
.vote-txt small { font-size: 24px; line-height: 30px; }
.vote-tri-up {
  border-left: 10px solid transparent;
  border-right: 10px solid transparent;
  border-bottom: 16px solid #e0440e;
}
.vote-tri-down {
  border-left: 10px solid transparent;
  border-right: 10px solid transparent;
  border-top: 16px solid #33a65a;
}

/* ===== Feed Header ===== */
.feed-head {
  height: 75px;
  display: flex;
  align-items: center;
  padding: 16px 43px 0 43px;
  border-bottom: 2px solid #dedede;
}
.feed-on, .feed-off { font-size: 36px; font-weight: 700; }
.feed-on { color: #333; }
.feed-off { color: #666; }
.feed-caret { width: 18px; height: 12px; margin: -10px 55px 0 7px; }
.feed-filter { width: 34px; height: 40px; margin-left: auto; margin-right: 18px; }
.feed-all { font-size: 33px; color: #666; }

/* ===== Dock ===== */
.dock {
  height: 119px;
  display: grid;
  grid-template-columns: 240px repeat(4, 210px);
  background: #f6f7f9;
}
.index-box {
  position: relative;
  padding-top: 24px;
  text-align: center;
}
.index-tri {
  position: absolute;
  left: 112px;
  top: 9px;
  border-left: 9px solid transparent;
  border-right: 9px solid transparent;
  border-bottom: 7px solid #888;
}
.index-val {
  font-size: 34px;
  line-height: 40px;
  color: #0a9a17;
  padding-right: 0;
  width: 243px;
}
.index-row {
  display: flex;
  justify-content: space-between;
  align-items: center;
  padding: 0 4px 0 38px;
  margin-top: 2px;
  font-size: 30px;
  line-height: 44px;
  color: #666;
}
.index-row .down { font-size: 32px; color: #0a9a17; }
.dock-item {
  display: flex;
  flex-direction: column;
  align-items: center;
  font-size: 30px;
  color: #666;
  padding-top: 9px;
}
.dock-item svg { height: 50px; width: 58px; }
.dock-item span { margin-top: 14px; line-height: 44px; }

/* ===== System Nav ===== */
.sysnav {
  height: 126px;
  background: #f0f0f2;
  display: flex;
  align-items: flex-start;
}
.nav-menu { width: 38px; height: 41px; margin: 41px 0 0 214px; }
.nav-leaf { width: 64px; height: 66px; margin: 28px 0 0 250px; }
.nav-back { width: 24px; height: 40px; margin: 42px 0 0 259px; }
```

FILE: chart.js
```js
// ==== helpers ====
const NS = "http://www.w3.org/2000/svg";
function add(parent, tag, attrs) {
  const node = document.createElementNS(NS, tag);
  for (const k in attrs) node.setAttribute(k, attrs[k]);
  parent.appendChild(node);
  return node;
}
const xAt = i => 24 + 26 * i;
const mainY = v => 560 + v / 2.376;
const volY = v => 1220 + v / 3;
const RED = "#bf3a36", GREEN = "#079907";

function drawLine(parent, values, toY, color, width) {
  const pts = values.map((v, i) => xAt(i) + "," + toY(v).toFixed(1)).join(" ");
  add(parent, "polyline", { points: pts, fill: "none", stroke: color, "stroke-width": width, "stroke-linejoin": "round" });
}

// ==== monthly candles: colour, wick top, wick bottom, body top, body bottom ====
const candles = [
  ["r",1078,1348,1192,1238], ["g",930,1340,1214,1320], ["g",1275,1360,1333,1338], ["r",1185,1348,1185,1337],
  ["g",1085,1308,1186,1276], ["r",1198,1278,1268,1278], ["g",1230,1345,1267,1320], ["r",1235,1337,1253,1318],
  ["r",1110,1272,1172,1255], ["g",1158,1245,1178,1200], ["g",1205,1473,1206,1405], ["r",1392,1442,1402,1414],
  ["g",1350,1550,1403,1505], ["r",1425,1535,1467,1502], ["r",1385,1497,1414,1470], ["r",1305,1425,1345,1415],
  ["r",1290,1372,1330,1346], ["g",1275,1382,1327,1382], ["r",1322,1522,1322,1382], ["r",1090,1345,1120,1310],
  ["g",1145,1352,1168,1305], ["g",1295,1465,1310,1382], ["g",1287,1438,1376,1382], ["r",1267,1432,1322,1382],
  ["g",1303,1437,1323,1393], ["r",1255,1473,1265,1398], ["g",1118,1400,1165,1200], ["r",20,1272,790,1205],
  ["g",430,1005,798,998], ["g",965,1122,1016,1075], ["r",707,1060,895,1060], ["g",763,1040,900,998],
  ["g",990,1280,1005,1092], ["g",1020,1128,1088,1112], ["r",1078,1195,1103,1133], ["r",1053,1132,1096,1105],
  ["r",700,1108,866,1097], ["g",828,1035,867,1003], ["r",866,1050,866,1000], ["r",432,825,480,795]
];

const candleGroup = document.getElementById("candles");
candles.forEach((c, i) => {
  const x = xAt(i), color = c[0] === "r" ? RED : GREEN;
  add(candleGroup, "line", { x1: x, x2: x, y1: mainY(c[1]), y2: mainY(c[2]), stroke: color, "stroke-width": 2.6 });
  const top = mainY(c[3]), h = Math.max(mainY(c[4]) - top, 3);
  if (c[0] === "r") {
    add(candleGroup, "rect", { x: x - 11.5, y: top, width: 23, height: h, fill: "#fff", stroke: color, "stroke-width": 2.8 });
  } else {
    add(candleGroup, "rect", { x: x - 11.5, y: top, width: 23, height: h, fill: color });
  }
});

// ==== price moving averages ====
const ma5 = [1378,1328,1307,1253,1265,1278,1278,1262,1255,1244,1270,1287,1340,1397,1438,1425,1412,1388,1360,1300,
  1293,1303,1303,1303,1355,1349,1310,1195,1130,1065,990,952,1012,1035,1040,1080,1052,1035,988,860];
const ma10 = [1370,1350,1352,1342,1342,1330,1305,1285,1255,1252,1275,1285,1298,1325,1340,1345,1352,1372,1378,1372,
  1360,1358,1345,1330,1325,1322,1305,1248,1215,1212,1172,1130,1098,1082,1052,1035,1003,1025,1012,952];
const ma20 = [1478,1458,1432,1412,1395,1384,1380,1365,1348,1328,1323,1316,1325,1333,1342,1340,1328,1323,1318,1312,
  1316,1320,1322,1326,1332,1333,1328,1305,1297,1290,1258,1240,1222,1205,1190,1177,1155,1135,1112,1082];

const lineGroup = document.getElementById("mainLines");
drawLine(lineGroup, ma20, mainY, "#c4198f", 2.6);
drawLine(lineGroup, ma10, mainY, "#f0b440", 2.6);
drawLine(lineGroup, ma5, mainY, "#222", 2.6);

// ==== volume bars: colour, bar top ====
const bars = [
  ["r",818],["g",825],["g",833],["r",825],["g",828],["r",832],["g",833],["r",830],["r",830],["g",830],
  ["g",830],["r",832],["g",832],["r",830],["r",832],["r",830],["r",833],["g",828],["r",833],["r",813],
  ["g",825],["g",825],["r",828],["r",802],["g",822],["r",808],["r",672],["r",146],["g",405],["g",714],
  ["r",574],["g",676],["g",748],["g",770],["r",770],["r",748],["r",491],["g",705],["r",760],["r",520]
];
const volBase = volY(846);
const barGroup = document.getElementById("volBars");
bars.forEach((b, i) => {
  const x = xAt(i), top = volY(b[1]);
  if (b[0] === "r") {
    add(barGroup, "rect", { x: x - 12, y: top, width: 24, height: volBase - top, fill: "#fff", stroke: RED, "stroke-width": 2.8 });
  } else {
    add(barGroup, "rect", { x: x - 12.5, y: top, width: 25, height: volBase - top, fill: GREEN });
  }
});

// ==== volume moving averages ====
const vma1 = [826,826,825,825,824,824,824,823,823,823,823,823,824,824,825,825,824,824,824,822,
  822,823,822,820,818,815,785,650,570,548,501,501,625,695,708,742,705,680,693,645];
const vma2 = [806,804,810,815,818,820,822,822,822,822,822,823,824,825,825,825,825,824,824,823,
  823,823,822,821,820,820,805,738,695,685,657,643,636,632,628,622,604,660,692,678];
const vma3 = [818,816,815,814,814,814,814,814,814,814,814,815,816,818,820,820,820,822,824,824,
  825,825,824,824,824,820,815,782,765,750,742,733,730,728,725,722,705,697,695,682];
const volLines = document.getElementById("volLines");
drawLine(volLines, vma1, volY, "#f0c02e", 2.6);
drawLine(volLines, vma2, volY, "#c832d0", 2.6);
drawLine(volLines, vma3, volY, "#129a1a", 2.6);

// ==== axis ticks, every bar from the 5th on, longer at labelled dates ====
const tickGroup = document.getElementById("volTicks");
for (let i = 4; i < 40; i++) {
  const major = i === 11 || i === 25 || i === 39;
  add(tickGroup, "line", {
    x1: xAt(i), x2: xAt(i), y1: 1506, y2: major ? 1518 : 1514,
    stroke: major ? "#666" : "#aaa", "stroke-width": major ? 2.4 : 1.6
  });
}
```
